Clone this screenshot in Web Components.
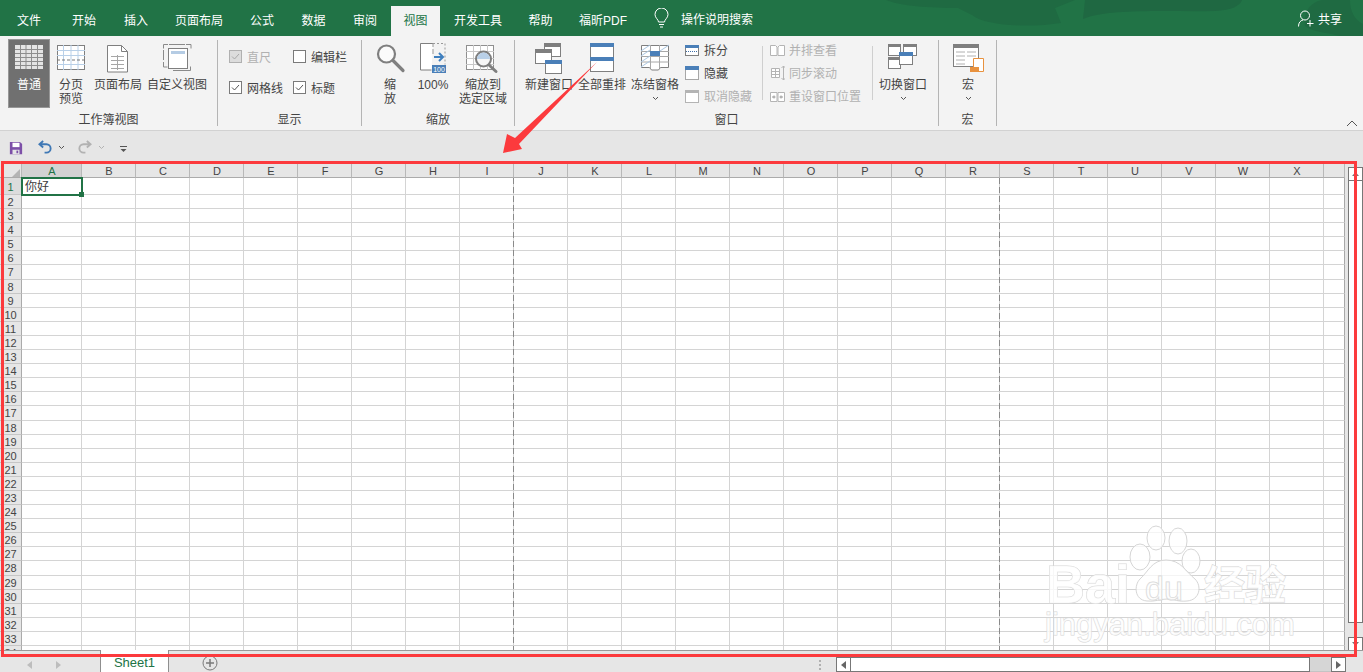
<!DOCTYPE html>
<html lang="zh">
<head>
<meta charset="utf-8">
<title>Excel</title>
<style>
  html, body { margin: 0; height: 672px; overflow: hidden; background: #e6e6e6; }
  body { font: 12px "Liberation Sans", "Noto Sans CJK SC", sans-serif; color: #444; display: flex; flex-direction: column; }
</style>
</head>
<body>

<x-titlebar>
  <x-tab w="58">文件</x-tab><x-tab w="52">开始</x-tab><x-tab w="52">插入</x-tab><x-tab w="74">页面布局</x-tab>
  <x-tab w="52">公式</x-tab><x-tab w="51">数据</x-tab><x-tab w="52">审阅</x-tab><x-tab w="49" active>视图</x-tab>
  <x-tab w="76">开发工具</x-tab><x-tab w="49">帮助</x-tab><x-tab w="76">福昕PDF</x-tab>
</x-titlebar>

<x-ribbon>
  <x-rgroup w="218" pad="8" label="工作簿视图">
    <x-rbtn w="42" active>
      <svg slot="icon" width="42" height="38" viewBox="8 39 42 38">
        <rect x="15" y="45" width="28" height="24" fill="#e4e4e4"/>
        <path d="M15 49.500h28M15 53.500h28M15 57.500h28M15 61.500h28M15 65.500h28M20.500 45v24M26 45v24M31.500 45v24M37.500 45v24" stroke="#8d8d8d" fill="none"/>
      </svg>普通</x-rbtn>
    <x-rbtn w="42">
      <svg slot="icon" width="42" height="38" viewBox="50 39 42 38">
        <rect x="57.500" y="45.500" width="27" height="24" fill="#fff" stroke="#7f7f7f"/>
        <path d="M57 50.500h28M57 55.500h28M57 64.500h28M63.500 45v25M71 45v25M78 45v25" stroke="#b9d0e8" fill="none"/>
        <path d="M57 60h28" stroke="#777" stroke-dasharray="3 2" fill="none"/>
      </svg>分页<br>预览</x-rbtn>
    <x-rbtn w="52">
      <svg slot="icon" width="52" height="38" viewBox="92 39 52 38">
        <path d="M107.500 45.500h14l6 6v20.500h-20z" fill="#fff" stroke="#7f7f7f"/>
        <path d="M121.500 45.500v6h6" fill="none" stroke="#7f7f7f"/>
        <path d="M111 56.500h13M111 60.500h13M111 64.500h13M111 68.500h13M117.500 55v15" stroke="#a6a6a6" fill="none"/>
      </svg>页面布局</x-rbtn>
    <x-rbtn w="66">
      <svg slot="icon" width="66" height="38" viewBox="144 39 66 38">
        <path d="M168 44.500h-4.500v4M163.500 62v5h4M186 44.500h5v4M169 44.500h16" fill="none" stroke="#8a8a8a"/>
        <path d="M173 70.500h17.500v-4M163.500 50v10" fill="none" stroke="#8a8a8a"/>
        <rect x="168.500" y="48.500" width="19" height="20" fill="#fff" stroke="#7f7f7f"/>
        <rect x="171" y="51" width="14" height="3" fill="#b5cce4"/>
      </svg>自定义视图</x-rbtn>
  </x-rgroup>

  <x-rgroup w="144" label="显示">
    <x-checks>
      <x-check checked disabled>直尺</x-check><x-check>编辑栏</x-check>
      <x-check checked>网格线</x-check><x-check checked>标题</x-check>
    </x-checks>
  </x-rgroup>

  <x-rgroup w="153" pad="6" label="缩放">
    <x-rbtn w="44">
      <svg slot="icon" width="44" height="38" viewBox="368 39 44 38">
        <circle cx="386.500" cy="54" r="8.500" fill="#fbfbfb" stroke="#7f7f7f" stroke-width="2.200"/>
        <path d="M393 60.500l10 10" stroke="#7f7f7f" stroke-width="3.200" stroke-linecap="round"/>
      </svg>缩<br>放</x-rbtn>
    <x-rbtn w="42">
      <svg slot="icon" width="42" height="38" viewBox="412 39 42 38">
        <path d="M433 43.500h-12.500v26.500h11" fill="#fff" stroke="#7f7f7f"/>
        <path d="M433 43.500h12v21" fill="none" stroke="#999" stroke-dasharray="2 2"/>
        <path d="M433 49v5M433 43v4" stroke="#999" fill="none"/>
        <path d="M434 57h8M439 53l4 4-4 4" fill="none" stroke="#3f7fbe" stroke-width="2"/>
        <rect x="432" y="65" width="14" height="8" fill="#4a7fb8"/>
        <text x="439" y="71.500" font-size="7" fill="#fff" text-anchor="middle" font-family="Liberation Sans">100</text>
      </svg>100%</x-rbtn>
    <x-rbtn w="58">
      <svg slot="icon" width="58" height="38" viewBox="454 39 58 38">
        <rect x="466.500" y="45.500" width="27" height="24" fill="#fff" stroke="#8f8f8f"/>
        <path d="M466 51.500h28M466 58.500h28M466 64.500h28M473.500 45v25M480.500 45v25M487.500 45v25" stroke="#c8c8c8" fill="none"/>
        <circle cx="483.500" cy="59" r="7.500" fill="#f6f6f6" stroke="#7f7f7f" stroke-width="2"/>
        <path d="M477 59a6.500 6.500 0 0 1 13 0z" fill="#b9d0e8"/>
        <path d="M489 65l7 6.500" stroke="#7f7f7f" stroke-width="3" stroke-linecap="round"/>
      </svg>缩放到<br>选定区域</x-rbtn>
  </x-rgroup>

  <x-rgroup w="424" pad="7" label="窗口">
    <x-rbtn w="54">
      <svg slot="icon" width="54" height="38" viewBox="522 39 54 38">
        <rect x="544.500" y="43.500" width="16" height="13" fill="#fff" stroke="#7f7f7f"/><rect x="544" y="43" width="17" height="4" fill="#7f7f7f"/>
        <rect x="535.500" y="49.500" width="16" height="14" fill="#fff" stroke="#7f7f7f"/><rect x="535" y="49" width="17" height="4" fill="#7f7f7f"/>
        <rect x="545.500" y="60.500" width="16" height="13" fill="#fff" stroke="#7f7f7f"/><rect x="545" y="60" width="17" height="4" fill="#4a7fb8"/>
      </svg>新建窗口</x-rbtn>
    <x-rbtn w="52">
      <svg slot="icon" width="52" height="38" viewBox="576 39 52 38">
        <rect x="590.500" y="43.500" width="23" height="28" fill="#fff" stroke="#7f7f7f"/>
        <rect x="590" y="43" width="24" height="4" fill="#4a7fb8"/><rect x="590" y="57" width="24" height="4" fill="#4a7fb8"/>
      </svg>全部重排</x-rbtn>
    <x-rbtn w="54" more>
      <svg slot="icon" width="54" height="38" viewBox="628 39 54 38">
        <path d="M641.500 45.500h27v22h-8l-2 2.500h-7l-2-2.500h-8z" fill="#fff" stroke="#7f7f7f"/>
        <path d="M641 51.500h28M641 56.500h28M641 62h28M650.500 45v23M659.500 45v23" stroke="#a8a8a8" fill="none"/>
        <path d="M641 51l9-6M641 56l9-6M641 62l9-6M641 67l9-6M660 51l9-6" stroke="#a9c6e2" fill="none"/>
        <rect x="650" y="51" width="10" height="5" fill="#4a7fb8"/>
      </svg>冻结窗格</x-rbtn>
    <x-smalls w="81" pad="3" sep>
      <x-rsmall>
        <svg slot="icon" width="15" height="14" viewBox="685 44 15 14"><rect x="685.500" y="45.500" width="13" height="10" fill="#fff" stroke="#7f7f7f"/><rect x="685" y="45" width="14" height="3" fill="#4a7fb8"/><path d="M686 51.500h12" stroke="#3f6fa8" stroke-dasharray="1 1"/></svg>拆分</x-rsmall>
      <x-rsmall>
        <svg slot="icon" width="15" height="16" viewBox="685 66 15 16"><rect x="685.500" y="67.500" width="13" height="12" fill="#fff" stroke="#555" stroke-dasharray="1 1"/><rect x="685" y="66" width="14" height="4" fill="#4a7fb8"/></svg>隐藏</x-rsmall>
      <x-rsmall disabled>
        <svg slot="icon" width="15" height="14" viewBox="685 89 15 14"><rect x="685.500" y="89.500" width="13" height="12" fill="#fff" stroke="#b4b4b4"/><rect x="685" y="89" width="14" height="3" fill="#b4b4b4"/></svg>取消隐藏</x-rsmall>
    </x-smalls>
    <x-smalls w="110" pad="7" sep>
      <x-rsmall disabled>
        <svg slot="icon" width="15" height="14" viewBox="771 44 15 14"><path d="M771.500 45.500h5l1.500 1.500v8.500h-6.500zM785.500 45.500h-5l-1.500 1.500v8.500h6.500z" fill="#fff" stroke="#b4b4b4"/></svg>并排查看</x-rsmall>
      <x-rsmall disabled>
        <svg slot="icon" width="15" height="16" viewBox="771 66 15 16"><path d="M772.500 68.500h8v9h-8zM772.500 71.500h8M772.500 74.500h8M776.500 68v10" fill="#fff" stroke="#b4b4b4"/><path d="M784.500 66v14M782.500 68l2-2 2 2M782.500 78l2 2 2-2" fill="none" stroke="#b4b4b4"/></svg>同步滚动</x-rsmall>
      <x-rsmall disabled>
        <svg slot="icon" width="15" height="14" viewBox="771 89 15 14"><path d="M771.500 91.500h6.500v9h-6.500zM785.500 91.500h-6.500v9h6.500z" fill="#fff" stroke="#b4b4b4"/><path d="M773 96h3.500M775 94.500v3M780.500 96h3.500M782 94.500v3" stroke="#999" fill="none"/></svg>重设窗口位置</x-rsmall>
    </x-smalls>
    <x-rbtn w="52" more style="margin-left:4px">
      <svg slot="icon" width="52" height="38" viewBox="878 39 52 38">
        <rect x="889.500" y="44.500" width="12" height="11" fill="#fff" stroke="#7f7f7f"/><rect x="889" y="44" width="13" height="3" fill="#7f7f7f"/>
        <rect x="904.500" y="44.500" width="13" height="11" fill="#fff" stroke="#7f7f7f"/><rect x="904" y="44" width="14" height="3" fill="#7f7f7f"/>
        <rect x="889.500" y="57.500" width="12" height="11" fill="#fff" stroke="#7f7f7f"/><rect x="889" y="57" width="13" height="3" fill="#7f7f7f"/>
        <rect x="900.500" y="52.500" width="13" height="12" fill="#fff" stroke="#7f7f7f"/><rect x="900" y="52" width="14" height="4" fill="#4a7fb8"/>
      </svg>切换窗口</x-rbtn>
  </x-rgroup>

  <x-rgroup w="58" label="宏">
    <x-rbtn w="58" more>
      <svg slot="icon" width="58" height="38" viewBox="939 39 58 38">
        <rect x="953.500" y="44.500" width="25" height="22" fill="#fff" stroke="#7f7f7f"/><rect x="953" y="44" width="26" height="4" fill="#7f7f7f"/>
        <path d="M956 52h9M967 52h9M956 56h9M967 56h9M956 60h9M956 64h9" stroke="#b0b0b0" fill="none"/>
        <path d="M973.500 58.500h10v13h-10z" fill="#fff" stroke="#e8923f"/>
        <rect x="970" y="67" width="9" height="5" fill="#e8923f"/>
      </svg>宏</x-rbtn>
  </x-rgroup>
</x-ribbon>

<x-qat></x-qat>
<x-sheet></x-sheet>
<x-sheetbar></x-sheetbar>
<x-annotation></x-annotation>
<x-watermark></x-watermark>

<script>
const BASE = ':host{box-sizing:border-box}*{box-sizing:border-box}';

class XTitlebar extends HTMLElement {
  constructor() {
    super();
    this.attachShadow({ mode: 'open' }).innerHTML = `
    <style>
      ${BASE}
      :host { display:flex; position:relative; height:36px; flex:none; background:#217346; color:#fff; overflow:hidden; }
      .bg { position:absolute; left:0; top:0; }
      .tabs, .search, .share { position:relative; display:flex; align-items:flex-end; }
      .search { margin-left:13px; align-items:center; gap:12px; }
      .share { margin-left:auto; margin-right:21px; align-items:center; gap:4px; }
    </style>
    <svg class="bg" width="1363" height="36" viewBox="0 0 1363 36">
      <path d="M886 0C900 6 930 8 958 8L972 15C985 26 1030 28 1061 23L1055 8 1075 0z" fill="#1f6a42"/>
      <path d="M1083 19C1110 8 1170 12 1215 11 1232 10 1240 6 1242 0H1085z" fill="#1f6842"/>
      <path d="M1305 26C1303 10 1312 2 1322 0H1350C1350 12 1355 20 1363 24V36H1340C1325 32 1312 32 1305 26z" fill="#1f6a42"/>
    </svg>
    <div class="tabs"><slot></slot></div>
    <div class="search">
      <svg width="15" height="20" viewBox="0 0 15 20" fill="none" stroke="#fff"><path d="M4.500 14c0-2.500-3.500-4-3.500-7.500a6.500 6.500 0 0 1 13 0c0 3.500-3.500 5-3.500 7.500zM5 16.500h5M6 19h3"/></svg>
      <span>操作说明搜索</span>
    </div>
    <div class="share">
      <svg width="16" height="17" viewBox="0 0 16 17" fill="none" stroke="#fff"><circle cx="7" cy="5.500" r="4.500"/><path d="M.5 16.500c0-4 2-6 4.500-6.500M9 13.500h6.500M12 10v6.500"/></svg>
      <span>共享</span>
    </div>`;
  }
}

class XTab extends HTMLElement {
  constructor() {
    super();
    this.attachShadow({ mode: 'open' }).innerHTML = `
    <style>
      ${BASE}
      :host { display:flex; align-items:center; justify-content:center; height:30px; color:#fff; }
      :host([active]) { background:#f3f3f3; color:#217346; }
      span { margin-bottom:4px; }
    </style><span><slot></slot></span>`;
  }
  connectedCallback() { this.style.width = this.getAttribute('w') + 'px'; }
}

class XRibbon extends HTMLElement {
  constructor() {
    super();
    this.attachShadow({ mode: 'open' }).innerHTML = `
    <style>
      ${BASE}
      :host { display:flex; position:relative; height:95px; flex:none; background:#f3f3f3; border-bottom:1px solid #d2d2d2; }
      svg { position:absolute; right:5px; bottom:3px; }
    </style>
    <slot></slot>
    <svg width="12" height="7" viewBox="0 0 12 7" fill="none" stroke="#555"><path d="M1 6l5-5 5 5"/></svg>`;
  }
}

class XRgroup extends HTMLElement {
  constructor() {
    super();
    this.attachShadow({ mode: 'open' }).innerHTML = `
    <style>
      ${BASE}
      :host { display:flex; flex-direction:column; position:relative; height:94px; padding-top:3px; flex:none; }
      :host::after { content:""; position:absolute; right:0; top:4px; bottom:4px; width:1px; background:#b4b4b4; }
      .body { display:flex; height:74px; }
      .label { height:14px; line-height:14px; text-align:center; margin-right:1px; color:#444; }
    </style>
    <div class="body"><slot></slot></div>
    <div class="label"></div>`;
  }
  connectedCallback() {
    this.style.width = this.getAttribute('w') + 'px';
    this.shadowRoot.querySelector('.body').style.paddingLeft = (this.getAttribute('pad') || 0) + 'px';
    this.shadowRoot.querySelector('.label').textContent = this.getAttribute('label');
  }
}

class XRbtn extends HTMLElement {
  constructor() {
    super();
    this.attachShadow({ mode: 'open' }).innerHTML = `
    <style>
      ${BASE}
      :host { display:flex; flex-direction:column; align-items:center; flex:none; line-height:14px; text-align:center; height:69px; color:#444; }
      :host([active]) { background:#707070; color:#fff; box-shadow:inset 0 0 0 1px #979797; }
      .icon { display:block; height:39px; }
      ::slotted(svg) { display:block; }
      .more { display:none; margin-top:4px; }
      :host([more]) .more { display:block; }
    </style>
    <div class="icon"><slot name="icon"></slot></div>
    <div><slot></slot></div>
    <svg class="more" width="7" height="5" viewBox="0 0 7 5" fill="none" stroke="#555"><path d="M1 1l2.500 2.500L6 1"/></svg>`;
  }
  connectedCallback() { this.style.width = this.getAttribute('w') + 'px'; }
}

class XChecks extends HTMLElement {
  constructor() {
    super();
    this.attachShadow({ mode: 'open' }).innerHTML = `
    <style>
      ${BASE}
      :host { display:grid; grid-template-columns:64px 70px; grid-auto-rows:18px; row-gap:13px; padding:8px 0 0 11px; }
    </style><slot></slot>`;
  }
}

class XCheck extends HTMLElement {
  constructor() {
    super();
    this.attachShadow({ mode: 'open' }).innerHTML = `
    <style>
      ${BASE}
      :host { display:flex; align-items:center; gap:5px; color:#444; white-space:nowrap; }
      :host([disabled]) { color:#b1b1b1; }
      .box { width:13px; height:13px; background:#fff; border:1px solid #7a7a7a; display:flex; }
      :host([disabled]) .box { background:#dcdcdc; border-color:#b0b0b0; }
      svg { display:none; }
      :host([checked]) svg { display:block; }
      :host([disabled]) path { stroke:#a8a8a8; }
    </style>
    <div class="box"><svg width="11" height="11" viewBox="0 0 11 11" fill="none"><path d="M2 5.500l2.500 2.500L9 3" stroke="#555"/></svg></div>
    <span><slot></slot></span>`;
  }
}

class XSmalls extends HTMLElement {
  constructor() {
    super();
    this.attachShadow({ mode: 'open' }).innerHTML = `
    <style>
      ${BASE}
      :host { display:flex; flex-direction:column; position:relative; height:69px; flex:none; }
      :host([sep])::after { content:""; position:absolute; right:0; top:7px; height:54px; width:1px; background:#cfcfcf; }
    </style><slot></slot>`;
  }
  connectedCallback() {
    this.style.width = this.getAttribute('w') + 'px';
    this.style.paddingLeft = this.getAttribute('pad') + 'px';
  }
}

class XRsmall extends HTMLElement {
  constructor() {
    super();
    this.attachShadow({ mode: 'open' }).innerHTML = `
    <style>
      ${BASE}
      :host { display:flex; align-items:center; gap:4px; height:23px; color:#444; white-space:nowrap; }
      :host([disabled]) { color:#b1b1b1; }
      ::slotted(svg) { display:block; flex:none; }
      span { margin-bottom:2px; }
    </style><slot name="icon"></slot><span><slot></slot></span>`;
  }
}

class XQat extends HTMLElement {
  constructor() {
    super();
    this.attachShadow({ mode: 'open' }).innerHTML = `
    <style>
      ${BASE}
      :host { display:flex; align-items:center; height:32px; flex:none; padding:0 0 0 9px; background:#e6e6e6; }
      svg { display:block; flex:none; }
    </style>
    <svg width="14" height="14" viewBox="0 0 16 16" style="margin-top:2px">
      <path d="M1 1h11.500L15 3.500V15H1z" fill="#7d50a8"/><rect x="4" y="2" width="8" height="5" fill="#fff"/><rect x="4" y="10" width="8" height="5" fill="#e6e6e6"/><rect x="8.500" y="11" width="2" height="3" fill="#7d50a8"/>
    </svg>
    <svg width="15" height="14" viewBox="0 0 16 15" style="margin-left:15px" fill="none" stroke="#3f78b5" stroke-width="2"><path d="M5.500 1L1.500 4.500 5.500 8M2 4.500h7a4.500 4.500 0 0 1 0 9H7"/></svg>
    <svg width="7" height="5" viewBox="0 0 7 5" style="margin-left:5px" fill="none" stroke="#555"><path d="M1 1l2.500 2.500L6 1"/></svg>
    <svg width="15" height="14" viewBox="0 0 16 15" style="margin-left:12px" fill="none" stroke="#b2b2b2" stroke-width="2"><path d="M10.500 1l4 3.500-4 3.500M14 4.500H7a4.500 4.500 0 0 0 0 9h2"/></svg>
    <svg width="7" height="5" viewBox="0 0 7 5" style="margin-left:6px" fill="none" stroke="#b2b2b2"><path d="M1 1l2.500 2.500L6 1"/></svg>
    <svg width="7" height="7" viewBox="0 0 7 7" style="margin:2px 0 0 15px" stroke="#555"><path d="M0 1.500h7" fill="none"/><path d="M.5 4h6L3.500 7z" fill="#555" stroke="none"/></svg>`;
  }
}

class XSheet extends HTMLElement {
  constructor() {
    super();
    const cols = 'ABCDEFGHIJKLMNOPQRSTUVWX'.split('');
    let cells = '<div class="corner"><svg width="22" height="15" viewBox="0 0 22 15"><path d="M20 6v8h-8z" fill="#b4b4b4"/></svg></div>';
    cols.forEach((c, i) => { cells += `<div class="ch${i === 0 ? ' on' : ''}">${c}</div>`; });
    cells += '<div class="ch"></div>';
    for (let r = 1; r <= 34; r++) {
      cells += `<div class="rh${r === 1 ? ' on' : ''}">${r}</div>`;
      for (let c = 0; c <= cols.length; c++) {
        cells += `<div class="c${c === cols.length ? ' end' : ''}">${r === 1 && c === 0 ? '你好' : ''}</div>`;
      }
    }
    this.attachShadow({ mode: 'open' }).innerHTML = `
    <style>
      ${BASE}
      :host { display:flex; height:487px; flex:none; background:#e6e6e6; font-size:11px; }
      .wrap { position:relative; width:1345px; height:487px; overflow:hidden; flex:none; }
      .grid { display:grid; grid-template-columns:22px 60px repeat(23,54px) 21px; grid-template-rows:15px 17px repeat(33,14.1px); background:#fff; }
      .corner, .ch { background:#e6e6e6; border-right:1px solid #b8b8b8; border-bottom:1px solid #ababab; text-align:center; line-height:17px; padding-left:1px; color:#444; overflow:hidden; }
      .corner { padding:0; }
      .corner svg { display:block; }
      .ch.on { background:#d2d2d2; color:#217346; border-bottom-color:#217346; }
      .rh { background:#e6e6e6; border-right:1px solid #ababab; border-bottom:1px solid #c6c6c6; text-align:center; line-height:15px; color:#444; overflow:hidden; }
      .rh.on { color:#217346; line-height:19px; background:#dcdcdc; }
      .c { border-right:1px solid #d4d4d4; border-bottom:1px solid #d4d4d4; font-size:12px; line-height:19px; padding-left:3px; color:#3c3c3c; min-width:0; overflow:hidden; }
      .c.end { border-right-color:#a8a8a8; }
      .sel { position:absolute; left:21px; top:14px; width:62px; height:19px; border:2px solid #217346; }
      .sel::after { content:""; position:absolute; right:-3px; bottom:-3px; width:5px; height:5px; background:#217346; }
      .brk { position:absolute; top:15px; bottom:0; width:1px; background:repeating-linear-gradient(#8a8a8a 0 6px, transparent 6px 9px); }
      .vs { width:18px; padding:4px 0 0 3px; display:flex; flex-direction:column; }
      .b { height:14px; width:15px; background:#fff; border:1px solid #777; display:flex; align-items:center; justify-content:center; flex:none; }
      .thumb { height:442px; width:15px; background:#fff; border:1px solid #777; border-top:0; flex:none; }
      .gap { height:14px; flex:none; }
    </style>
    <div class="wrap">
      <div class="grid">${cells}</div>
      <div class="sel"></div>
      <div class="brk" style="left:513px"></div>
      <div class="brk" style="left:999px"></div>
    </div>
    <div class="vs">
      <div class="b"><svg width="7" height="4" viewBox="0 0 7 4"><path d="M3.500 0L7 4H0z" fill="#777"/></svg></div>
      <div class="thumb"></div>
      <div class="gap"></div>
      <div class="b"><svg width="7" height="4" viewBox="0 0 7 4"><path d="M3.500 4L7 0H0z" fill="#777"/></svg></div>
    </div>`;
  }
}

class XSheetbar extends HTMLElement {
  constructor() {
    super();
    this.attachShadow({ mode: 'open' }).innerHTML = `
    <style>
      ${BASE}
      :host { display:flex; height:22px; flex:none; background:#e6e6e6; }
      .nav { width:100px; height:22px; border-top:1px solid #9a9a9a; display:flex; align-items:center; gap:24px; padding:6px 0 0 27px; }
      .tab { width:69px; height:22px; background:#fff; border:1px solid #8f8f8f; border-top:0; border-bottom:0; color:#217346; font-size:13px; line-height:26px; text-align:center; }
      .rest { flex:1; height:22px; border-top:1px solid #9a9a9a; display:flex; align-items:flex-start; position:relative; }
      .plus { margin:4px 0 0 33px; display:block; }
      .dots { position:absolute; left:650px; top:9px; width:2px; height:10px; background:repeating-linear-gradient(#b0b0b0 0 2px, transparent 2px 4px); }
      .hs { position:absolute; left:667px; top:6px; display:flex; height:15px; }
      .b { width:15px; background:#fff; border:1px solid #777; display:flex; align-items:center; justify-content:center; flex:none; }
      .thumb { width:459px; background:#fff; border:1px solid #777; border-left:0; }
      .track { width:21px; background:#d6d6d6; border-bottom:1px solid #c4c4c4; }
    </style>
    <div class="nav">
      <svg width="5" height="8" viewBox="0 0 5 8"><path d="M5 0v8L0 4z" fill="#bdbdbd"/></svg>
      <svg width="5" height="8" viewBox="0 0 5 8"><path d="M0 0v8l5-4z" fill="#bdbdbd"/></svg>
    </div>
    <div class="tab">Sheet1</div>
    <div class="rest">
      <svg class="plus" width="16" height="16" viewBox="0 0 16 16" fill="none" stroke="#7a7a7a"><circle cx="8" cy="8" r="7"/><path d="M8 4v8M4 8h8" stroke-width="1.500"/></svg>
      <div class="dots"></div>
      <div class="hs">
        <div class="b"><svg width="5" height="8" viewBox="0 0 5 8"><path d="M5 0v8L0 4z" fill="#666"/></svg></div>
        <div class="thumb"></div>
        <div class="track"></div>
        <div class="b"><svg width="5" height="8" viewBox="0 0 5 8"><path d="M0 0v8l5-4z" fill="#666"/></svg></div>
      </div>
    </div>`;
  }
}

class XAnnotation extends HTMLElement {
  constructor() {
    super();
    this.attachShadow({ mode: 'open' }).innerHTML = `
    <style>
      :host { position:absolute; left:0; top:0; width:1363px; height:672px; pointer-events:none; }
      .box { position:absolute; box-sizing:border-box; left:1px; top:161px; width:1356px; height:496px; border:3px solid #fc3a3d; }
      svg { position:absolute; left:0; top:0; }
    </style>
    <div class="box"></div>
    <svg width="1363" height="672" viewBox="0 0 1363 672">
      <path d="M597 62L515 138 507 134 503 153 522 149 519 144z" fill="#fc3a3d"/>
    </svg>`;
  }
}

class XWatermark extends HTMLElement {
  constructor() {
    super();
    this.attachShadow({ mode: 'open' }).innerHTML = `
    <style>
      :host { position:absolute; left:1040px; top:520px; width:260px; height:130px; pointer-events:none; }
      svg { display:block; }
      text { fill:rgba(255,255,255,.8); stroke:#d6d6d6; stroke-width:1; paint-order:stroke; }
      ellipse, .pad { fill:rgba(255,255,255,.75); stroke:#d6d6d6; }
    </style>
    <svg width="260" height="130" viewBox="1040 520 260 130">
      <ellipse cx="1140" cy="557" rx="10" ry="13"/>
      <ellipse cx="1156" cy="538" rx="9" ry="12"/>
      <ellipse cx="1178" cy="541" rx="9" ry="13"/>
      <ellipse cx="1191" cy="561" rx="9" ry="12"/>
      <path class="pad" d="M1166 560c-14 0-18 12-26 19-6 6-6 21 7 22 8 1 13-2 20-2s11 3 20 2c13-1 15-15 8-22-9-7-14-19-29-19z"/>
      <text x="1046" y="603" font-family="Liberation Sans" font-weight="700" font-size="54">Bai</text>
      <text x="1145" y="600" font-family="Liberation Sans" font-size="34" style="fill:rgba(255,255,255,.4)">du</text>
      <text x="1204" y="600" font-family="Noto Sans CJK SC" font-weight="700" font-size="41">经验</text>
      <text x="1045" y="635" font-family="Liberation Sans" font-size="31">jingyan.baidu.com</text>
    </svg>`;
  }
}

customElements.define('x-titlebar', XTitlebar);
customElements.define('x-tab', XTab);
customElements.define('x-ribbon', XRibbon);
customElements.define('x-rgroup', XRgroup);
customElements.define('x-rbtn', XRbtn);
customElements.define('x-checks', XChecks);
customElements.define('x-check', XCheck);
customElements.define('x-smalls', XSmalls);
customElements.define('x-rsmall', XRsmall);
customElements.define('x-qat', XQat);
customElements.define('x-sheet', XSheet);
customElements.define('x-sheetbar', XSheetbar);
customElements.define('x-annotation', XAnnotation);
customElements.define('x-watermark', XWatermark);
</script>
</body>
</html>
